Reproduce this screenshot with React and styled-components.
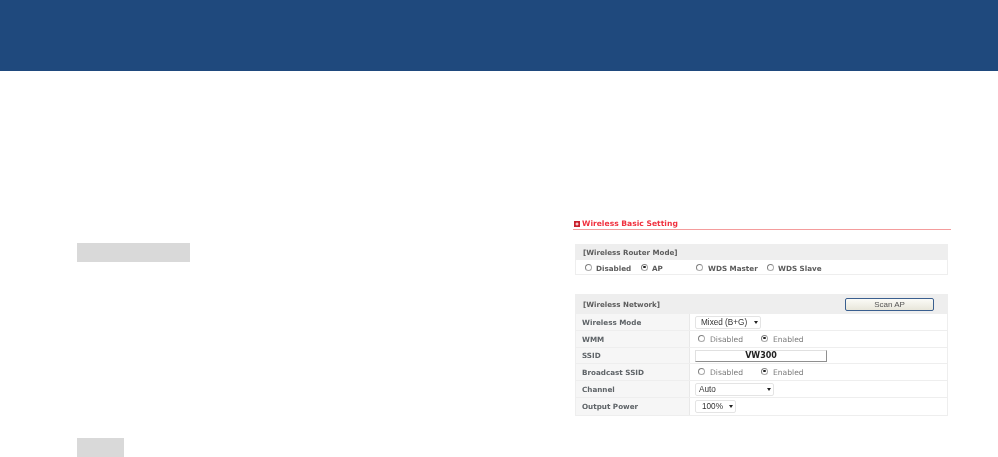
import React from "react";
import styled, { createGlobalStyle } from "styled-components";

const Global = createGlobalStyle`
  html, body { margin: 0; padding: 0; background: #fff; overflow: hidden; }
  body { font-family: "DejaVu Sans", sans-serif; }
`;
const Page = styled.div`width: 998px; height: 457px; display: flex; flex-direction: column; overflow: hidden;`;
const Banner = styled.header`height: 71px; flex: none; background: #1f497d;`;
const Body = styled.main`flex: 1; display: flex; justify-content: space-between; padding: 0 47px 0 77px;`;
const LeftColumn = styled.div`display: flex; flex-direction: column; gap: 176px; padding-top: 172px;`;
const Placeholder = styled.div`height: 19px; width: ${p => p.$w}px; background: #d9d9d9;`;
const Settings = styled.section`width: 378px; padding-top: 146px; display: flex; flex-direction: column; filter: blur(0.3px);`;
const Title = styled.h2`
  margin: 0; height: 12px; padding-top: 2px; box-sizing: border-box; display: flex; align-items: center; gap: 2px;
  border-bottom: 1px solid #f49c9c; font-size: 7.6px; line-height: 10px; font-weight: 700; color: #f0313f;
  height: 13px;
`;
const Bullet = styled.svg`width: 6px; height: 6px; flex: none; margin-left: 1px;`;
const Box = styled.div`
  width: 373px; margin-left: 2px; border: solid #eeeeee; border-width: 0 1px 1px 1px; box-sizing: border-box;
  margin-top: ${p => p.$top}px;
`;
const BoxHead = styled.div`
  height: ${p => p.$h}px; background: #eeeeee; display: flex; align-items: center; justify-content: space-between;
  padding: ${p => p.$offset ?? 0}px 13px 0 7px; font-size: 7.1px; font-weight: 700; color: #5c5c5c; box-sizing: border-box;
`;
const ModeRow = styled.div`height: 14px; display: flex; align-items: center; padding: 2px 0 0 9px; box-sizing: border-box; font-size: 7.2px; font-weight: 700; color: #5c5c5c;`;
const Option = styled.label`display: flex; align-items: center; gap: ${p => p.$gap ?? 5}px; width: ${p => p.$w}px; flex: none; color: inherit; font-weight: inherit; font-size: inherit;`;
const RadioOffset = styled.span`margin-left: ${p => p.$left}px; display: flex;`;
const Dot = styled.span`
  width: 5px; height: 5px; border-radius: 50%; border: 1px solid #aaaaaa; border-top-color: #808080; border-left-color: #808080; background: #fff; flex: none; position: relative; top: -1px;
  ${p => p.$on && `&::after { content: ""; position: absolute; left: 1.25px; top: 1.25px; width: 2.5px; height: 2.5px; border-radius: 50%; background: #222; }`}
`;
const ScanButton = styled.button`
  width: 89px; height: 13px; padding: 0; border: 1px solid #3a5f8f; border-radius: 2px;
  background: linear-gradient(#fbfbf7, #e8e6da); font: 8px "Liberation Sans", sans-serif; color: #555;
`;
const Row = styled.div`
  height: ${p => p.$h}px; display: grid; grid-template-columns: 114px 1fr; border-bottom: 1px solid #eeeeee; box-sizing: border-box;
  &:last-child { border-bottom: 0; }
`;
const Label = styled.div`
  background: #f6f6f6; border-right: 1px solid #e8e8e8; padding-left: 6px; display: flex; align-items: center;
  font-size: 7.2px; font-weight: 700; color: #5f6468;
`;
const Field = styled.div`display: flex; align-items: center; padding-left: 5px; font-size: 7.6px; color: #7a7a7a;`;
const Select = styled.div`
  width: ${p => p.$w}px; height: 13px; border: 1px solid #e4e4e4; border-radius: 2px; box-sizing: border-box; display: flex; align-items: center; justify-content: space-between;
  padding: 0 2px 0 ${p => p.$pad}px; font: 8.2px "Liberation Sans", sans-serif; color: #333; background: #fff;
`;
const Caret = styled.span`width: 0; height: 0; border: 2.5px solid transparent; border-top: 3px solid #222; border-bottom: 0;`;
const SsidInput = styled.div`
  width: 132px; height: 12px; box-sizing: border-box; border: 1px solid; border-color: #e0e0e0 #8f8f8f #8f8f8f #e0e0e0;
  text-align: center; font: 700 8px/10px "DejaVu Sans", sans-serif; color: #222;
`;

const rows = [
  { label: "Wireless Mode", h: 17, kind: "select", w: 66, pad: 5, value: "Mixed (B+G)" },
  { label: "WMM", h: 17, kind: "radio" },
  { label: "SSID", h: 16, kind: "ssid" },
  { label: "Broadcast SSID", h: 17, kind: "radio" },
  { label: "Channel", h: 17, kind: "select", w: 79, pad: 3, value: "Auto" },
  { label: "Output Power", h: 17, kind: "select", w: 41, pad: 6, value: "100%" },
];

function Control({ r }) {
  if (r.kind === "select") return <Select $w={r.w} $pad={r.pad}>{r.value}<Caret /></Select>;
  if (r.kind === "ssid") return <SsidInput>VW300</SsidInput>;
  return (
    <>
      <RadioOffset $left={3}><Option $w={63} $gap={5}><Dot />Disabled</Option></RadioOffset>
      <Option $gap={5}><Dot $on />Enabled</Option>
    </>
  );
}

export default function App() {
  return (
    <Page>
      <Global />
      <Banner />
      <Body>
        <LeftColumn>
          <Placeholder $w={113} />
          <Placeholder $w={47} />
        </LeftColumn>
        <Settings>
          <Title>
            <Bullet viewBox="0 0 6 6"><rect width="6" height="6" fill="#c8202c" /><rect x="1.5" y="2.5" width="3" height="1" fill="#fff" /><rect x="2.5" y="1.5" width="1" height="3" fill="#fff" /></Bullet>
            Wireless Basic Setting
          </Title>
          <Box $top={14}>
            <BoxHead $h={16}>[Wireless Router Mode]</BoxHead>
            <ModeRow>
              <Option $w={56} $gap={4}><Dot />Disabled</Option>
              <Option $w={55} $gap={4}><Dot $on />AP</Option>
              <Option $w={71} $gap={5}><Dot />WDS Master</Option>
              <Option $gap={4}><Dot />WDS Slave</Option>
            </ModeRow>
          </Box>
          <Box $top={19}>
            <BoxHead $h={20} $offset={1}>[Wireless Network]<ScanButton>Scan AP</ScanButton></BoxHead>
            {rows.map(r => (
              <Row key={r.label} $h={r.h}>
                <Label>{r.label}</Label>
                <Field><Control r={r} /></Field>
              </Row>
            ))}
          </Box>
        </Settings>
      </Body>
    </Page>
  );
}
